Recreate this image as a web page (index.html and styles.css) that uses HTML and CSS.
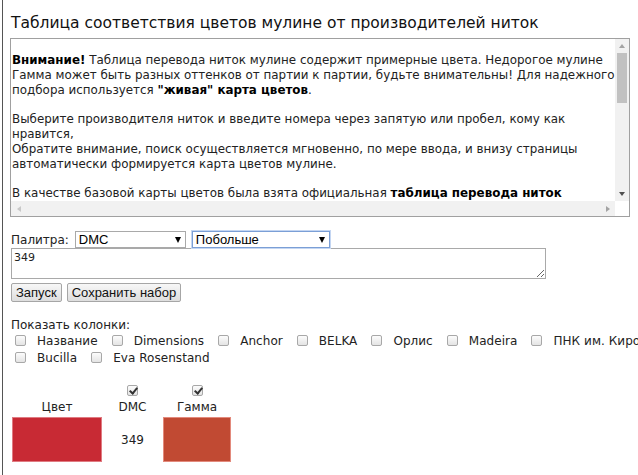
FILE: index.html
```html
<!DOCTYPE html>
<html lang="ru">
<head>
<meta charset="utf-8">
<title>Таблица соответствия цветов мулине</title>
<link rel="stylesheet" href="styles.css">
</head>
<body>
<div class="page">
  <h1 class="title">Таблица соответствия цветов мулине от производителей ниток</h1>

  <div class="notice">
    <div class="notice-text">
      <p><b>Внимание!</b> Таблица перевода ниток мулине содержит примерные цвета. Недорогое мулине<br>Гамма может быть разных оттенков от партии к партии, будьте внимательны! Для надежного<br>подбора используется <b>"живая" карта цветов</b>.</p>
      <p>Выберите производителя ниток и введите номера через запятую или пробел, кому как<br>нравится,<br>Обратите внимание, поиск осуществляется мгновенно, по мере ввода, и внизу страницы<br>автоматически формируется карта цветов мулине.</p>
      <p>В качестве базовой карты цветов была взята официальная <b>таблица перевода ниток</b><br><b>мулине Dimensions в DMC и Anchor</b>.</p>
    </div>
    <div class="vbar">
      <span class="sb-btn"><span class="tri tri-up"></span></span>
      <span class="thumb"></span>
      <span class="sb-btn"><span class="tri tri-down"></span></span>
    </div>
    <div class="hbar">
      <span class="sb-btn"><span class="tri tri-left"></span></span>
      <span class="sb-btn"><span class="tri tri-right"></span></span>
    </div>
    <div class="corner"></div>
  </div>

  <div class="palette-row">
    <span class="label">Палитра:</span>
    <div class="select select-maker"><span>DMC</span><span class="sel-arrow"></span></div>
    <div class="select select-mode"><span>Побольше</span><span class="sel-arrow"></span></div>
  </div>
  <textarea class="numbers" rows="2">349</textarea>
  <div class="buttons">
    <button class="btn">Запуск</button>
    <button class="btn">Сохранить набор</button>
  </div>

  <div class="columns-title">Показать колонки:</div>
  <div class="cb-row">
    <input type="checkbox" class="cb"><span class="cb-label">Название</span>
    <input type="checkbox" class="cb"><span class="cb-label">Dimensions</span>
    <input type="checkbox" class="cb"><span class="cb-label">Anchor</span>
    <input type="checkbox" class="cb"><span class="cb-label">BELKA</span>
    <input type="checkbox" class="cb"><span class="cb-label">Орлис</span>
    <input type="checkbox" class="cb"><span class="cb-label">Madeira</span>
    <input type="checkbox" class="cb"><span class="cb-label">ПНК им. Кирова</span>
  </div>
  <div class="cb-row">
    <input type="checkbox" class="cb"><span class="cb-label">Bucilla</span>
    <input type="checkbox" class="cb"><span class="cb-label">Eva Rosenstand</span>
  </div>

  <table class="colors">
    <thead>
      <tr>
        <th class="col-color">Цвет</th>
        <th class="col-dmc"><input type="checkbox" class="cb cb-small" checked><br>DMC</th>
        <th class="col-gamma"><input type="checkbox" class="cb cb-small" checked><br>Гамма</th>
      </tr>
    </thead>
    <tbody>
      <tr>
        <td class="swatch swatch-dmc" style="background:#c82a34"></td>
        <td class="num">349</td>
        <td class="swatch swatch-gamma" style="background:#c14a33"></td>
      </tr>
    </tbody>
  </table>
</div>
</body>
</html>
```

FILE: styles.css
```css
html, body {
  margin: 0;
  padding: 0;
  overflow: hidden;
  background: #fff;
}
body {
  font-family: "DejaVu Sans", Verdana, sans-serif;
  font-size: 12px;
  color: #222;
}
.page {
  margin-left: 2px;
  border-left: 1px solid #555;
  padding-left: 8px;
  min-height: 475px;
  width: 700px;
  box-sizing: border-box;
}
.title {
  font-family: "DejaVu Sans", Verdana, sans-serif;
  font-size: 15.5px;
  font-weight: normal;
  line-height: 22px;
  margin: 0;
  padding-top: 12px;
  padding-bottom: 4px;
  color: #111;
}

/* notice box with fake scrollbars */
.notice {
  margin-left: -1px;
  width: 620px;
  height: 179px;
  box-sizing: border-box;
  border: 1px solid #a0a0a0;
  display: grid;
  grid-template-columns: 1fr 14px;
  grid-template-rows: 1fr 15px;
}
.notice-text {
  overflow: hidden;
  white-space: nowrap;
  padding-left: 1px;
  font-size: 11.9px;
  line-height: 15px;
  color: #222;
}
.notice-text p {
  margin: 14px 0 12px;
}
.notice-text b {
  color: #000;
}
.vbar {
  background: #f1f1f1;
  display: flex;
  flex-direction: column;
  align-items: center;
}
.vbar .sb-btn {
  height: 14px;
  width: 100%;
  display: flex;
  align-items: center;
  justify-content: center;
}
.vbar .sb-btn:last-child {
  margin-top: auto;
}
.thumb {
  width: 10px;
  height: 50px;
  background: #c1c1c1;
}
.hbar {
  background: #f1f1f1;
  display: flex;
  justify-content: space-between;
  align-items: center;
}
.hbar .sb-btn {
  width: 15px;
  height: 15px;
  display: flex;
  align-items: center;
  justify-content: center;
}
.corner {
  background: #fff;
}
.tri {
  width: 0;
  height: 0;
  border-style: solid;
}
.tri-up {
  border-width: 0 3.5px 4px 3.5px;
  border-color: transparent transparent #a3a3a3 transparent;
}
.tri-down {
  border-width: 4px 3.5px 0 3.5px;
  border-color: #505050 transparent transparent transparent;
}
.tri-left {
  border-width: 3.5px 4px 3.5px 0;
  border-color: transparent #c8c8c8 transparent transparent;
}
.tri-right {
  border-width: 3.5px 0 3.5px 4px;
  border-color: transparent transparent transparent #a3a3a3;
}

/* palette controls */
.palette-row {
  display: flex;
  align-items: center;
  margin-top: 14px;
  height: 17px;
}
.label {
  margin-right: 6px;
}
.select {
  height: 17px;
  box-sizing: border-box;
  border: 1px solid #a9a9a9;
  background: #fff;
  font-family: "Liberation Sans", Arial, sans-serif;
  font-size: 13px;
  color: #000;
  display: flex;
  align-items: center;
  justify-content: space-between;
  padding: 0 4px 0 3px;
}
.select-maker {
  width: 111px;
}
.select-mode {
  width: 138px;
  margin-left: 6px;
  border-color: #7b9fd6;
  box-shadow: 0 0 0 1px #c4d6f2;
}
.sel-arrow {
  width: 0;
  height: 0;
  border-style: solid;
  border-width: 6px 3.5px 0 3.5px;
  border-color: #000 transparent transparent transparent;
}
.numbers {
  display: block;
  width: 535px;
  height: 31px;
  box-sizing: border-box;
  margin: 0;
  padding: 2px 2px;
  border: 1px solid #a9a9a9;
  font-family: "DejaVu Sans", Verdana, sans-serif;
  font-size: 11px;
  color: #222;
  resize: both;
}
.buttons {
  display: flex;
  gap: 5px;
  margin-top: 4px;
}
.btn {
  height: 19px;
  box-sizing: border-box;
  padding: 0 4px;
  border: 1px solid #a6a6a6;
  border-radius: 2px;
  background: linear-gradient(#f7f7f7, #dedede);
  font-family: "Liberation Sans", Arial, sans-serif;
  font-size: 13px;
  color: #111;
  line-height: 17px;
}

/* columns */
.columns-title {
  margin-top: 16px;
  margin-bottom: -1px;
  line-height: 15px;
}
.cb-row {
  display: flex;
  align-items: center;
  white-space: nowrap;
  height: 17px;
  color: #222;
  letter-spacing: 0.05px;
}
.cb {
  appearance: none;
  -webkit-appearance: none;
  width: 11px;
  height: 11px;
  margin: 0 11px 0 4px;
  border: 1px solid #a8a8a8;
  border-radius: 2px;
  background: linear-gradient(#fcfcfc, #e4e4e4);
  box-sizing: border-box;
  position: relative;
  flex: none;
}
.cb:checked::after {
  content: "";
  position: absolute;
  left: 3px;
  top: 0px;
  width: 3px;
  height: 6px;
  border: solid #333;
  border-width: 0 2px 2px 0;
  transform: rotate(40deg);
}
.cb-label {
  margin-right: 10px;
}

/* result table */
.colors {
  border-collapse: separate;
  border-spacing: 0;
  margin-top: 19px;
  margin-left: 1px;
}
.colors th {
  font-weight: normal;
  text-align: center;
  vertical-align: bottom;
  padding: 0 0 2px;
  line-height: 15px;
  color: #222;
}
.colors .cb-small {
  margin: 0 0 3px;
  vertical-align: top;
}
.col-color { width: 90px; }
.col-dmc { width: 61px; }
.col-gamma { width: 68px; }
.swatch {
  height: 45px;
  box-sizing: border-box;
  padding: 0;
}
.swatch-dmc { border: 1px solid #e07b82; }
.swatch-gamma { border: 1px solid #e38a7c; }
.num {
  text-align: center;
  vertical-align: middle;
  padding: 0;
}
```
